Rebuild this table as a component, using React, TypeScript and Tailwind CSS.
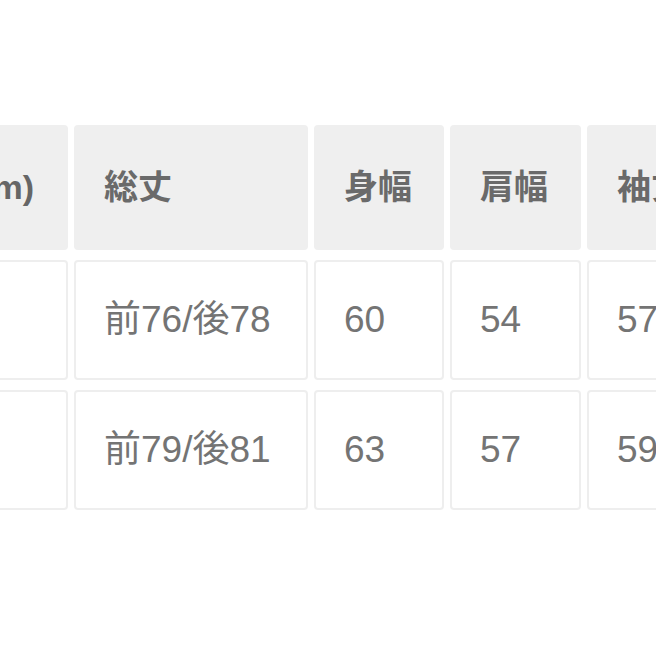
import React from 'react';

const headers = ['総丈', '身幅', '肩幅', '袖丈'];

const rows = [
  ['前76/後78', '60', '54', '57'],
  ['前79/後81', '63', '57', '59'],
];

const widths = ['w-[234px]', 'w-[130px]', 'w-[131px]', 'w-[130px]'];

const font = { fontFamily: '"Liberation Sans", "Noto Sans CJK JP", sans-serif' };

export default function App() {
  return (
    <div className="w-[656px] h-[656px] bg-white overflow-hidden" style={font}>
      <div className="pt-[125px] -ml-[233px] flex flex-col gap-[10px]">
        {/* header */}
        <div className="flex gap-[6px]">
          <div className="w-[301px] h-[125px] shrink-0 bg-[#efefef] rounded-[4px] flex items-center justify-end pr-[34px] text-[34px] font-bold text-[#666] whitespace-nowrap">
            サイズ(cm)
          </div>
          {headers.map((h, i) => (
            <div
              key={h}
              className={`${widths[i]} h-[125px] shrink-0 bg-[#efefef] rounded-[4px] flex items-center pl-[30px] text-[34px] font-bold text-[#6a6a6a] whitespace-nowrap`}
            >
              {h}
            </div>
          ))}
        </div>
        {rows.map((r, ri) => (
          <div key={ri} className="flex gap-[6px]">
            <div className="w-[301px] h-[120px] shrink-0 bg-white border-2 border-[#eeeeee] rounded-[4px]" />
            {r.map((c, i) => (
              <div
                key={i}
                className={`${widths[i]} h-[120px] shrink-0 bg-white border-2 border-[#eeeeee] rounded-[4px] flex items-center pl-[28px] text-[37px] text-[#747474] whitespace-nowrap`}
              >
                {c}
              </div>
            ))}
          </div>
        ))}
      </div>
    </div>
  );
}
